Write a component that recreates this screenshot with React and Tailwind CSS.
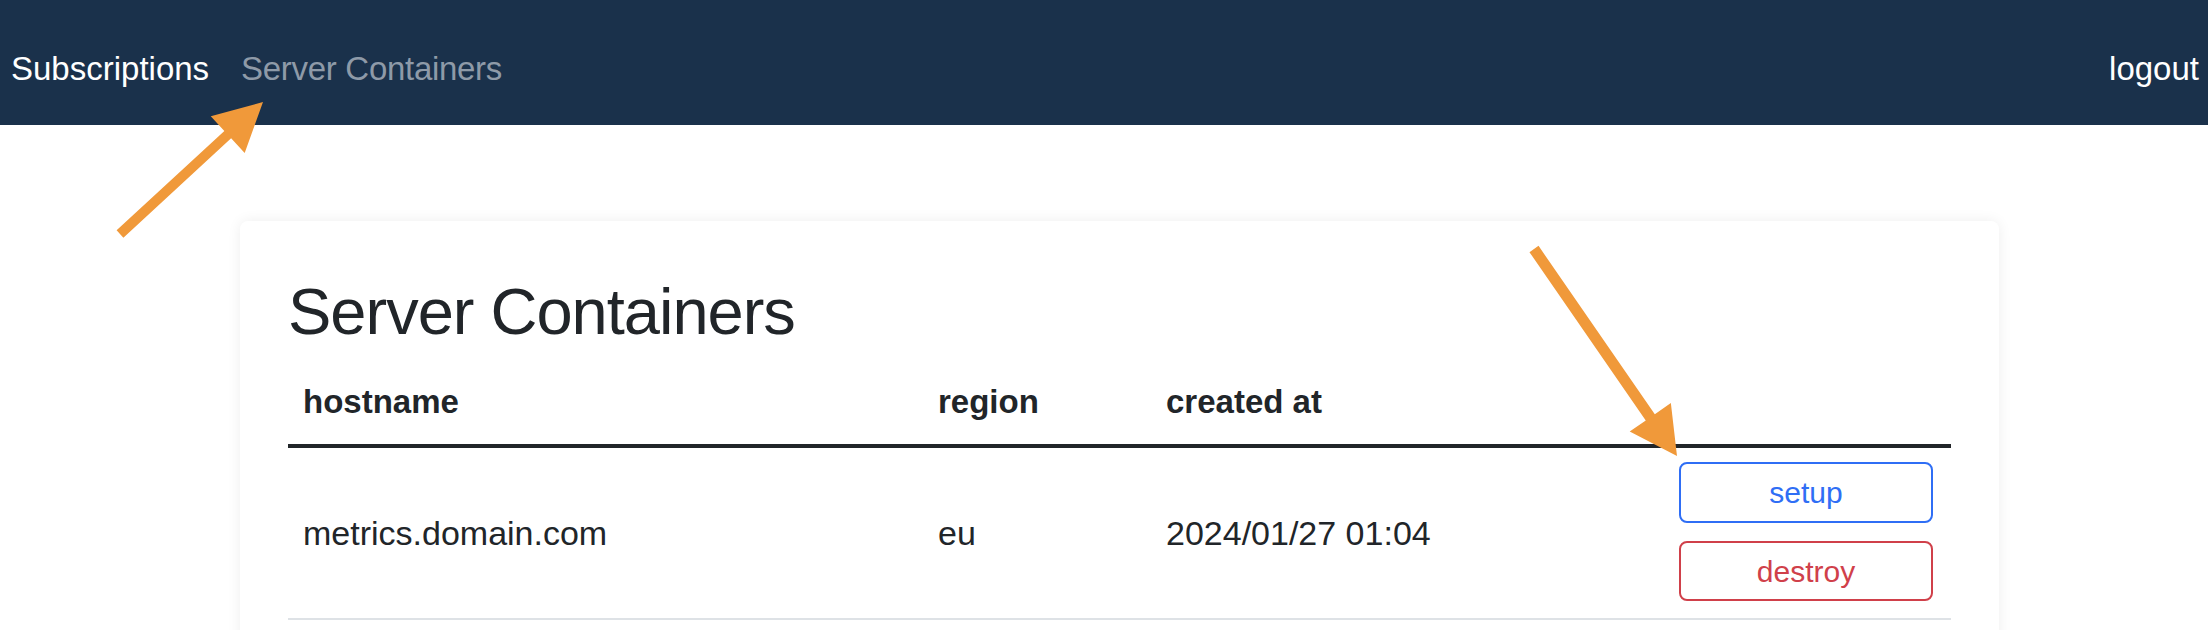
import React from 'react';

const arrowPoints = (tail, tip, shaft, headLen, headHalf) => {
  const dx = tip[0] - tail[0];
  const dy = tip[1] - tail[1];
  const len = Math.hypot(dx, dy);
  const ux = dx / len;
  const uy = dy / len;
  const nx = -uy;
  const ny = ux;
  const bx = tip[0] - ux * headLen;
  const by = tip[1] - uy * headLen;
  const s = shaft / 2;
  const pts = [
    [tail[0] + nx * s, tail[1] + ny * s],
    [bx + nx * s, by + ny * s],
    [bx + nx * headHalf, by + ny * headHalf],
    tip,
    [bx - nx * headHalf, by - ny * headHalf],
    [bx - nx * s, by - ny * s],
    [tail[0] - nx * s, tail[1] - ny * s],
  ];
  return pts.map((p) => p.join(',')).join(' ');
};

const containers = [
  { id: 1, hostname: 'metrics.domain.com', region: 'eu', createdAt: '2024/01/27 01:04' },
];

const App = () => {
  return (
    <div className="relative min-h-[630px] w-[2208px] overflow-hidden bg-white font-['Liberation_Sans',Arial,sans-serif] text-[#212529]">
      <nav className="flex h-[125px] items-center justify-between bg-[#1a314b] pt-[12px] pl-[11px] pr-[9px]">
        <div className="flex items-center text-[33px]">
          <a className="text-white">Subscriptions</a>
          <a className="ml-[32px] tracking-[-0.3px] text-[#8e9aa8]">Server Containers</a>
        </div>
        <a className="text-[33px] text-white">logout</a>
      </nav>

      <div className="ml-[240px] mt-[96px] w-[1759px] rounded-[8px] bg-white px-12 pt-[52px] pb-12 shadow-[0_0_14px_rgba(0,0,0,0.07)]">
        <h1 className="text-[65px] leading-[78px] tracking-[-1px]">Server Containers</h1>
        <table className="mt-[15px] w-full border-collapse">
          <thead>
            <tr className="border-b-4 border-[#212529] text-left text-[33px] font-bold">
              <th className="w-[635px] px-[15px] pt-3 pb-[18px] leading-[48px]">hostname</th>
              <th className="w-[228px] px-[15px] pt-3 pb-[18px] leading-[48px]">region</th>
              <th className="w-[512px] px-[15px] pt-3 pb-[18px] leading-[48px]">created at</th>
              <th className="px-4 pt-3 pb-[18px]"></th>
            </tr>
          </thead>
          <tbody>
            {containers.map((c) => (
              <tr key={c.id} className="border-b-2 border-[#dee2e6] text-[34px]">
                <td className="px-[15px] py-4 align-middle">{c.hostname}</td>
                <td className="px-[15px] py-4 align-middle">{c.region}</td>
                <td className="px-[15px] py-4 align-middle">{c.createdAt}</td>
                <td className="px-4 pt-[14px] pb-[17px]">
                  <div className="flex flex-col gap-[18px]">
                    <button className="h-[61px] w-[254px] rounded-[8px] border-2 border-[#2f6ef5] text-[30px] text-[#2f6ef5]">
                      setup
                    </button>
                    <button className="h-[60px] w-[254px] rounded-[8px] border-2 border-[#d0404a] text-[30px] text-[#d0404a]">
                      destroy
                    </button>
                  </div>
                </td>
              </tr>
            ))}
          </tbody>
        </table>
      </div>

      <svg className="pointer-events-none absolute left-0 top-0" width="2208" height="630">
        <polygon points={arrowPoints([120, 234], [263, 102], 10, 48, 25)} fill="#f0993a" />
        <polygon points={arrowPoints([1534, 249], [1677, 456], 11, 47, 25)} fill="#f0993a" />
      </svg>
    </div>
  );
};

export default App;
